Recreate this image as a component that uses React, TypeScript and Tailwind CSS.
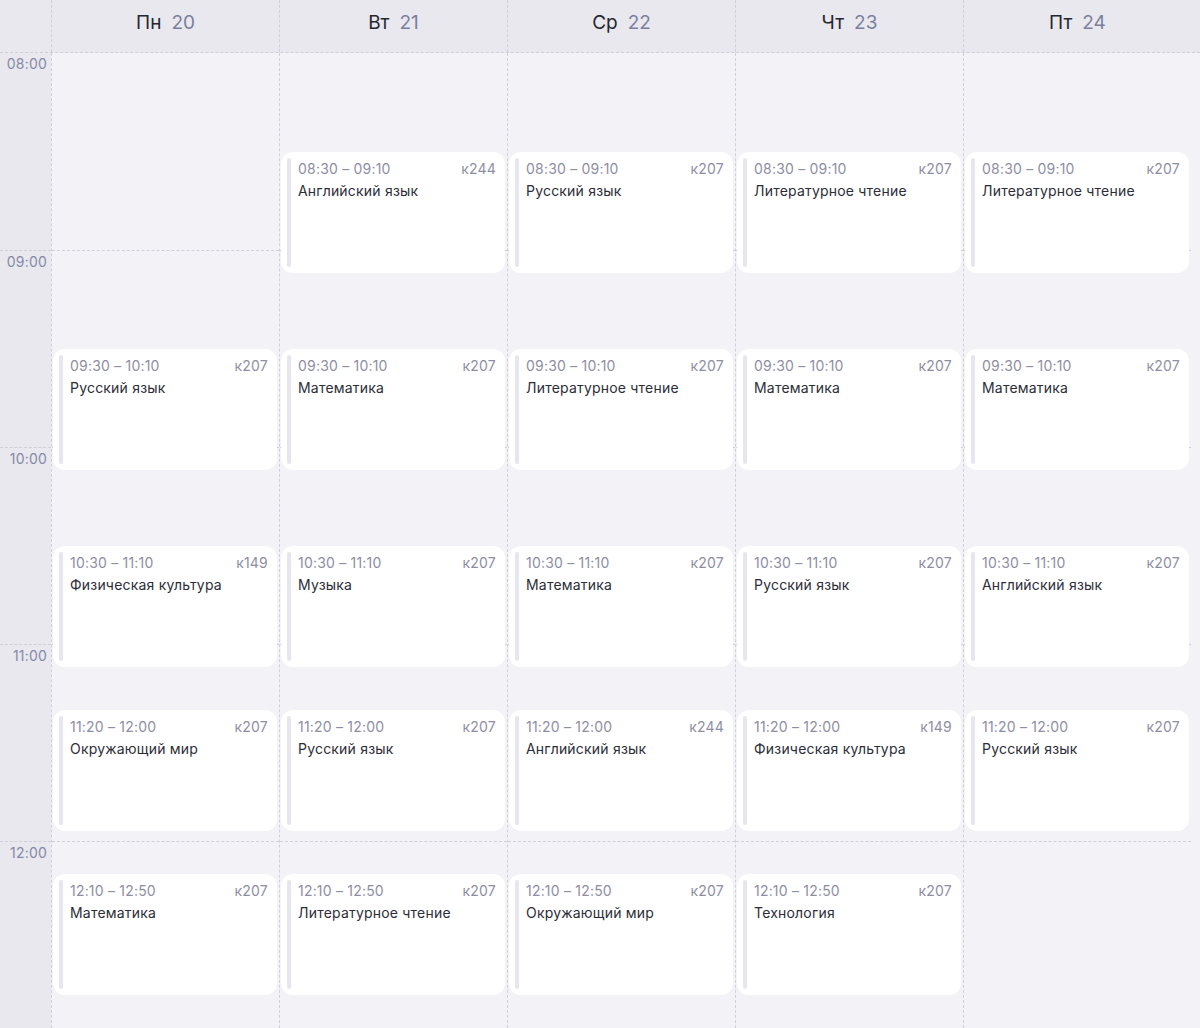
type Lesson = { start: string; end: string; title: string; room: string };

const HOUR = 197;
const DAY_START = 8 * 60;

const days: { name: string; date: number; lessons: Lesson[] }[] = [
    {
        name: 'Пн',
        date: 20,
        lessons: [
            { start: '09:30', end: '10:10', title: 'Русский язык', room: 'к207' },
            { start: '10:30', end: '11:10', title: 'Физическая культура', room: 'к149' },
            { start: '11:20', end: '12:00', title: 'Окружающий мир', room: 'к207' },
            { start: '12:10', end: '12:50', title: 'Математика', room: 'к207' },
        ],
    },
    {
        name: 'Вт',
        date: 21,
        lessons: [
            { start: '08:30', end: '09:10', title: 'Английский язык', room: 'к244' },
            { start: '09:30', end: '10:10', title: 'Математика', room: 'к207' },
            { start: '10:30', end: '11:10', title: 'Музыка', room: 'к207' },
            { start: '11:20', end: '12:00', title: 'Русский язык', room: 'к207' },
            { start: '12:10', end: '12:50', title: 'Литературное чтение', room: 'к207' },
        ],
    },
    {
        name: 'Ср',
        date: 22,
        lessons: [
            { start: '08:30', end: '09:10', title: 'Русский язык', room: 'к207' },
            { start: '09:30', end: '10:10', title: 'Литературное чтение', room: 'к207' },
            { start: '10:30', end: '11:10', title: 'Математика', room: 'к207' },
            { start: '11:20', end: '12:00', title: 'Английский язык', room: 'к244' },
            { start: '12:10', end: '12:50', title: 'Окружающий мир', room: 'к207' },
        ],
    },
    {
        name: 'Чт',
        date: 23,
        lessons: [
            { start: '08:30', end: '09:10', title: 'Литературное чтение', room: 'к207' },
            { start: '09:30', end: '10:10', title: 'Математика', room: 'к207' },
            { start: '10:30', end: '11:10', title: 'Русский язык', room: 'к207' },
            { start: '11:20', end: '12:00', title: 'Физическая культура', room: 'к149' },
            { start: '12:10', end: '12:50', title: 'Технология', room: 'к207' },
        ],
    },
    {
        name: 'Пт',
        date: 24,
        lessons: [
            { start: '08:30', end: '09:10', title: 'Литературное чтение', room: 'к207' },
            { start: '09:30', end: '10:10', title: 'Математика', room: 'к207' },
            { start: '10:30', end: '11:10', title: 'Английский язык', room: 'к207' },
            { start: '11:20', end: '12:00', title: 'Русский язык', room: 'к207' },
        ],
    },
];

const hours = ['08:00', '09:00', '10:00', '11:00', '12:00'];

function toMin(t: string) {
    const [h, m] = t.split(':').map(Number);
    return h * 60 + m;
}

function LessonCard({ lesson }: { lesson: Lesson }) {
    const top = ((toMin(lesson.start) - DAY_START) * HOUR) / 60;
    const height = ((toMin(lesson.end) - toMin(lesson.start)) * HOUR) / 60 - 10;
    return (
        <div
            className="absolute left-[1px] right-[2px] flex rounded-[12px] bg-white py-[6px] pl-[6px] pr-[9px]"
            style={{ top, height }}
        >
            <div className="w-[4px] shrink-0 rounded-full bg-[#e6e6ee]" />
            <div className="ml-[7px] flex min-w-0 flex-1 flex-col pt-[1px] tracking-[0.2px]">
                <div className="flex justify-between text-[14px] leading-[20px] text-[#8e8ea3]">
                    <span>
                        {lesson.start} – {lesson.end}
                    </span>
                    <span>{lesson.room}</span>
                </div>
                <p className="mt-[2px] text-[14px] leading-[20px] text-[#2d2d38]">{lesson.title}</p>
            </div>
        </div>
    );
}

export default function App() {
    return (
        <div className="flex h-[1028px] w-[1200px] flex-col overflow-hidden bg-[#f3f2f7] font-['Inter',sans-serif]">
            <div className="flex h-[53px] shrink-0 border-b border-dashed border-[#d0d0da] bg-[#e8e8ee]">
                <div className="w-[51px] shrink-0" />
                {days.map((d) => (
                    <div
                        key={d.name}
                        className="flex w-[228px] shrink-0 items-center justify-center gap-[10px] border-l border-dashed border-[#d0d0da] pb-[6px] text-[19px]"
                    >
                        <span className="text-[#26262e]">{d.name}</span>
                        <span className="text-[#7b7f9e]">{d.date}</span>
                    </div>
                ))}
                <div className="flex-1" />
            </div>

            <div className="flex flex-1">
                <div className="w-[51px] shrink-0 bg-[#e8e8ee]">
                    {hours.map((h, i) => (
                        <div
                            key={h}
                            className={
                                i === 0
                                    ? 'h-[197px] pr-[4px] pt-[1px] text-right text-[14px] leading-[20px] tracking-[0.2px] text-[#868aa6]'
                                    : 'h-[197px] border-t border-dashed border-[#d0d0da] pr-[4px] pt-[1px] text-right text-[14px] leading-[20px] tracking-[0.2px] text-[#868aa6]'
                            }
                        >
                            {h}
                        </div>
                    ))}
                </div>
                {days.map((d) => (
                    <div key={d.name} className="relative w-[228px] shrink-0 border-l border-dashed border-[#d0d0da]">
                        {hours.map((h, i) => (
                            <div
                                key={h}
                                className={i === 0 ? 'h-[197px]' : 'h-[197px] border-t border-dashed border-[#d0d0da]'}
                            />
                        ))}
                        {d.lessons.map((l) => (
                            <LessonCard key={l.start} lesson={l} />
                        ))}
                    </div>
                ))}
                <div className="flex-1" />
            </div>
        </div>
    );
}
